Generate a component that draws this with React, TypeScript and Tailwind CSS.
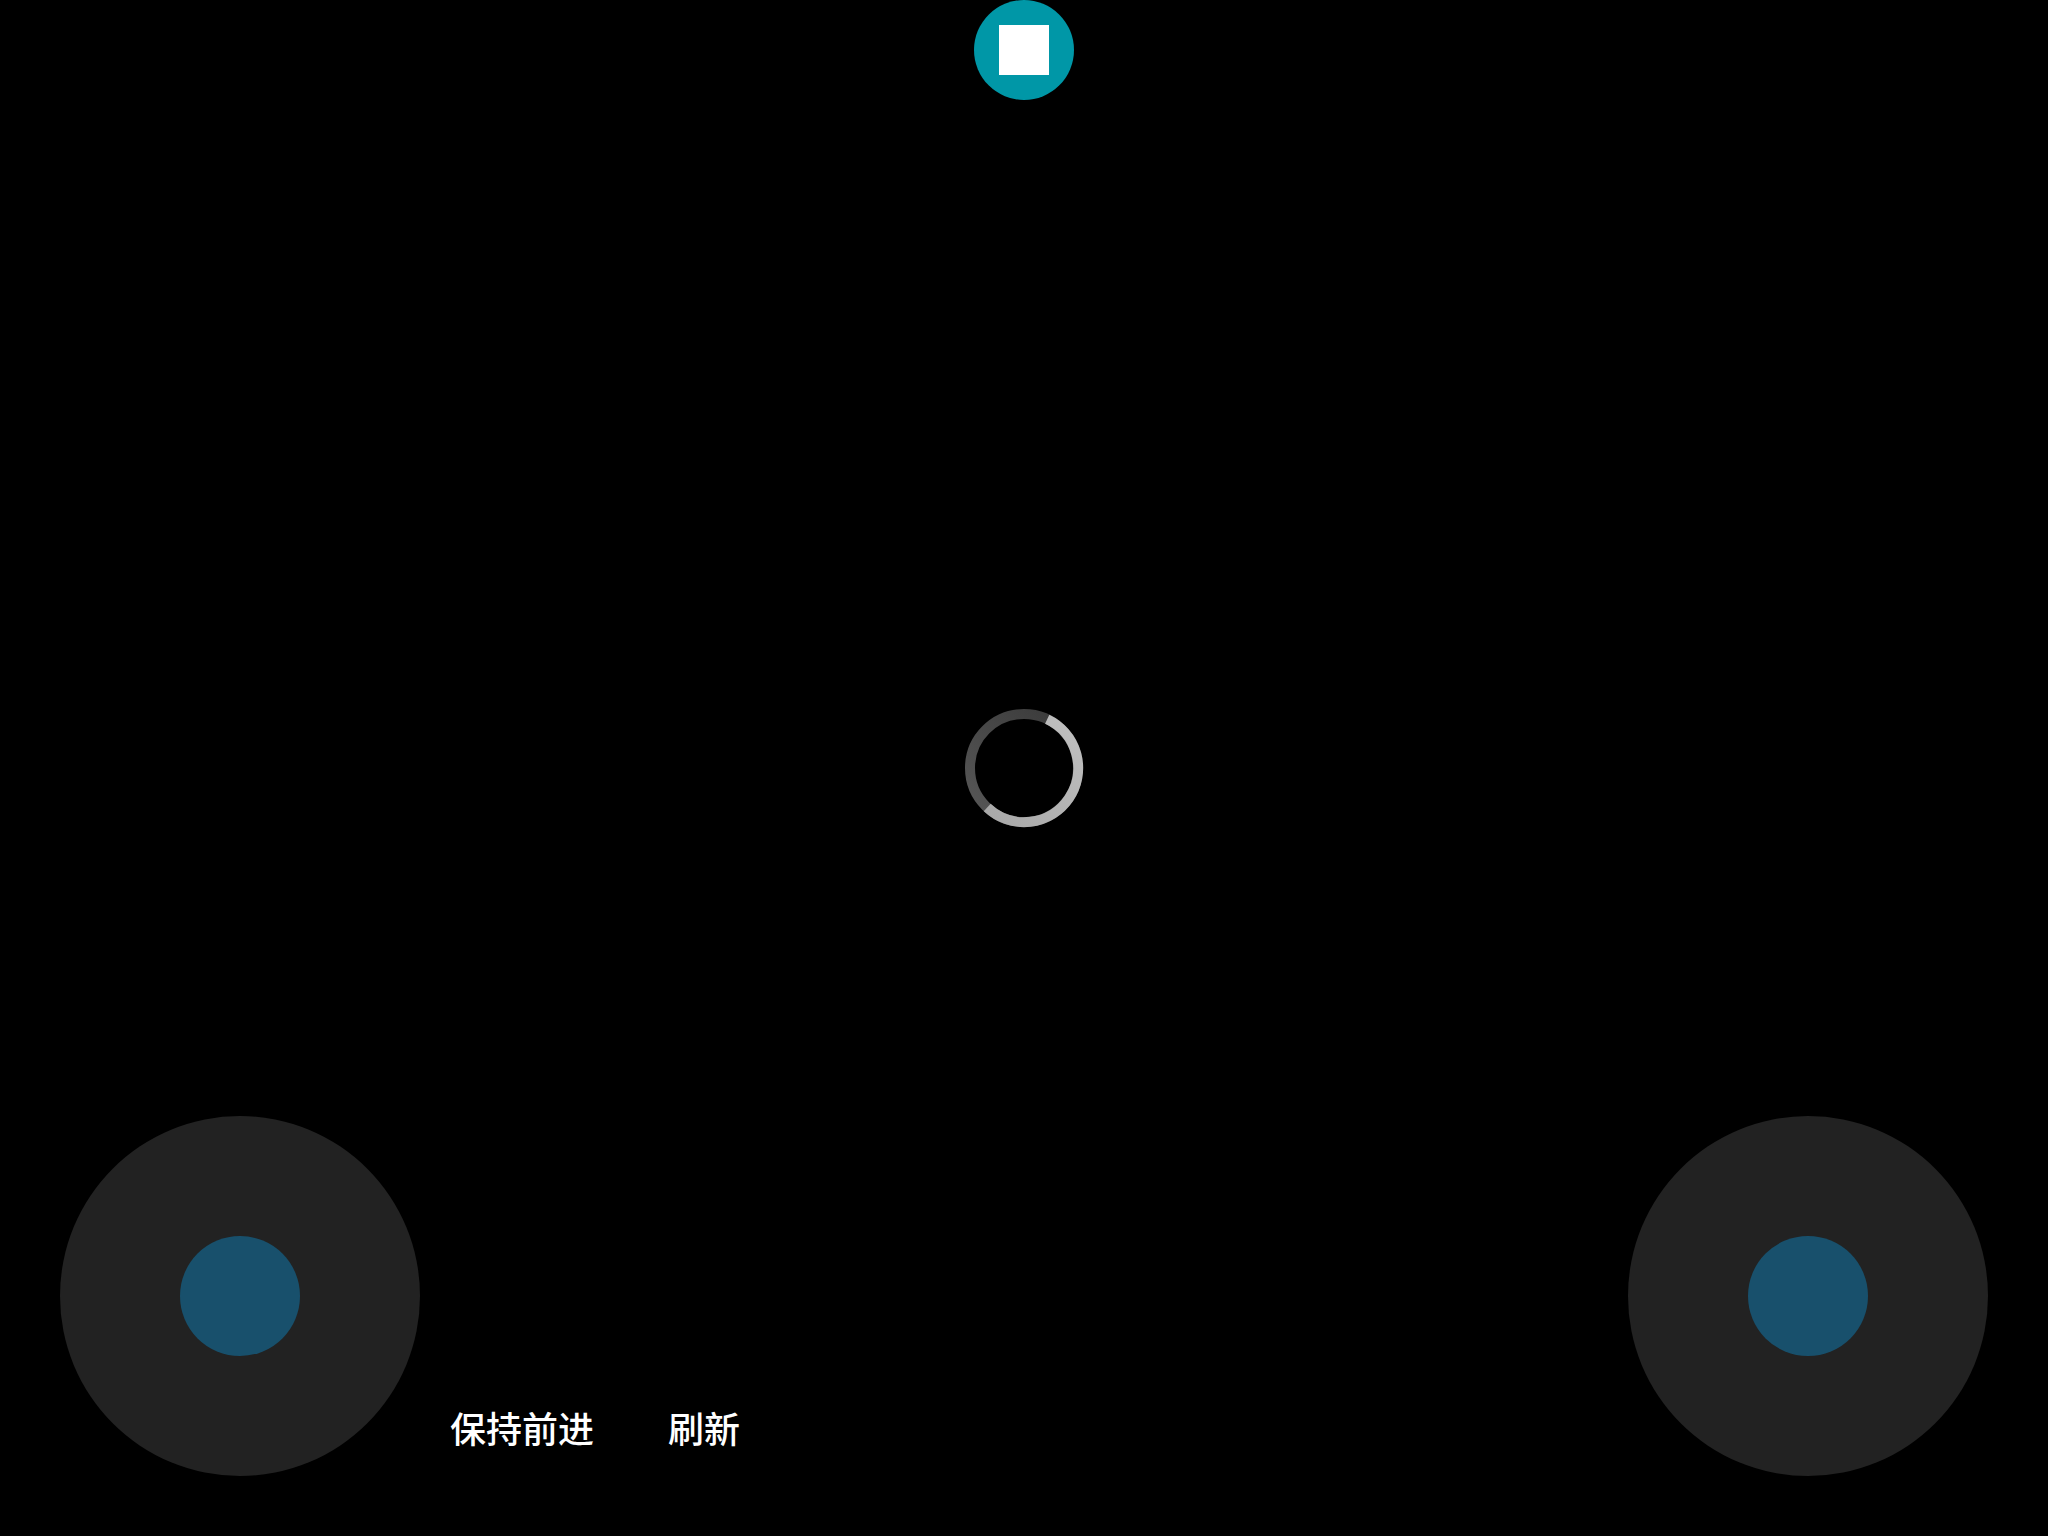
type JoystickProps = {
  label: string;
};

const Joystick = ({ label }: JoystickProps) => {
  return (
    <button
      type="button"
      aria-label={label}
      className="flex size-[360px] items-center justify-center rounded-full bg-[#222222]"
    >
      <span className="size-[120px] rounded-full bg-[#18506c]" />
    </button>
  );
};

const Spinner = () => {
  return (
    <svg
      role="status"
      aria-label="加载中"
      viewBox="0 0 120 120"
      fill="none"
      strokeWidth="10"
      className="size-[120px]"
    >
      <defs>
        <linearGradient id="track" x1="0" y1="1" x2="1" y2="0">
          <stop offset="0" stopColor="#585858" />
          <stop offset="1" stopColor="#383838" />
        </linearGradient>
        <linearGradient id="arc" x1="0" y1="1" x2="1" y2="0">
          <stop offset="0" stopColor="#a8a8a8" />
          <stop offset="1" stopColor="#c0c0c0" />
        </linearGradient>
      </defs>
      <circle cx="60" cy="60" r="54" stroke="url(#track)" />
      <path d="M83.2 11.3A54 54 0 1 1 23.2 99.5" stroke="url(#arc)" />
    </svg>
  );
};

const App = () => {
  return (
    <div className="grid min-h-screen grid-rows-[1fr_auto_1fr] bg-black font-['Noto_Sans_CJK_SC','Noto_Sans',sans-serif] text-white">
      <header className="flex items-start justify-center">
        <button
          type="button"
          aria-label="停止"
          className="flex size-[100px] items-center justify-center rounded-full bg-[#0097a7]"
        >
          <span className="size-[50px] bg-white" />
        </button>
      </header>

      <main className="flex justify-center">
        <Spinner />
      </main>

      <footer className="flex items-end justify-between px-[60px] pb-[60px]">
        <div className="flex items-end">
          <Joystick label="左摇杆" />
          <div className="flex gap-[74px] px-[30px] pb-6 text-[36px] leading-[50px] font-medium">
            <button type="button">保持前进</button>
            <button type="button">刷新</button>
          </div>
        </div>
        <Joystick label="右摇杆" />
      </footer>
    </div>
  );
};

export default App;
